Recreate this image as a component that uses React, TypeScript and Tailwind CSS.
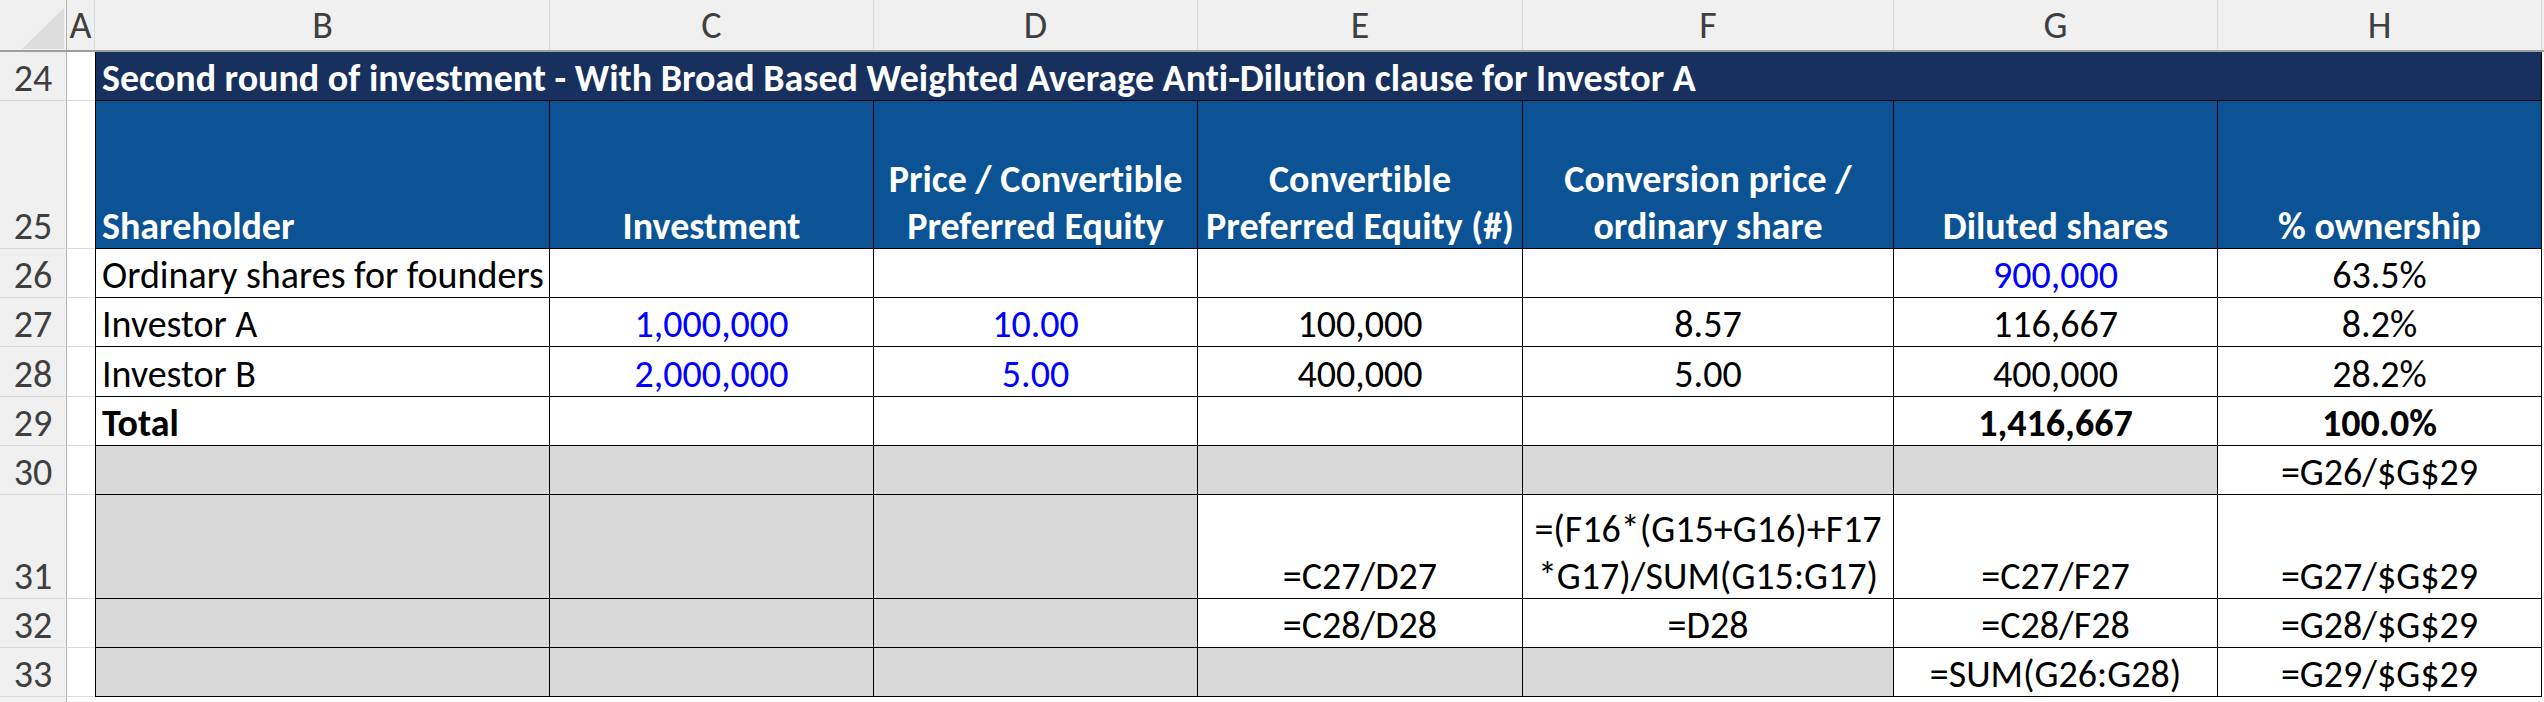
import React from "react"

type Cell = {
  text?: string
  lines?: string[]
  gray?: boolean
  blue?: boolean
  bold?: boolean
  left?: boolean
}

// column widths for B..H, in px (B also carries the table's left border)
const widths = ["w-[455px]", "w-[324px]", "w-[324px]", "w-[325px]", "w-[371px]", "w-[324px]", "w-[324px]"]
const letters = ["B", "C", "D", "E", "F", "G", "H"]

const headers: string[][] = [
  ["Shareholder"],
  ["Investment"],
  ["Price / Convertible", "Preferred Equity"],
  ["Convertible", "Preferred Equity (#)"],
  ["Conversion price /", "ordinary share"],
  ["Diluted shares"],
  ["% ownership"],
]

const rows: { num: number; h: string; cells: Cell[] }[] = [
  {
    num: 26,
    h: "h-[49px]",
    cells: [
      { text: "Ordinary shares for founders", left: true },
      {},
      {},
      {},
      {},
      { text: "900,000", blue: true },
      { text: "63.5%" },
    ],
  },
  {
    num: 27,
    h: "h-[49px]",
    cells: [
      { text: "Investor A", left: true },
      { text: "1,000,000", blue: true },
      { text: "10.00", blue: true },
      { text: "100,000" },
      { text: "8.57" },
      { text: "116,667" },
      { text: "8.2%" },
    ],
  },
  {
    num: 28,
    h: "h-[50px]",
    cells: [
      { text: "Investor B", left: true },
      { text: "2,000,000", blue: true },
      { text: "5.00", blue: true },
      { text: "400,000" },
      { text: "5.00" },
      { text: "400,000" },
      { text: "28.2%" },
    ],
  },
  {
    num: 29,
    h: "h-[49px]",
    cells: [
      { text: "Total", left: true, bold: true },
      {},
      {},
      {},
      {},
      { text: "1,416,667", bold: true },
      { text: "100.0%", bold: true },
    ],
  },
  {
    num: 30,
    h: "h-[49px]",
    cells: [
      { gray: true },
      { gray: true },
      { gray: true },
      { gray: true },
      { gray: true },
      { gray: true },
      { text: "=G26/$G$29" },
    ],
  },
  {
    num: 31,
    h: "h-[104px]",
    cells: [
      { gray: true },
      { gray: true },
      { gray: true },
      { text: "=C27/D27" },
      { lines: ["=(F16*(G15+G16)+F17", "*G17)/SUM(G15:G17)"] },
      { text: "=C27/F27" },
      { text: "=G27/$G$29" },
    ],
  },
  {
    num: 32,
    h: "h-[49px]",
    cells: [
      { gray: true },
      { gray: true },
      { gray: true },
      { text: "=C28/D28" },
      { text: "=D28" },
      { text: "=C28/F28" },
      { text: "=G28/$G$29" },
    ],
  },
  {
    num: 33,
    h: "h-[49px]",
    cells: [
      { gray: true },
      { gray: true },
      { gray: true },
      { gray: true },
      { gray: true },
      { text: "=SUM(G26:G28)" },
      { text: "=G29/$G$29" },
    ],
  },
]

function RowNum({ n, h }: { n?: number; h: string }) {
  return (
    <div className={`${h} w-[67px] shrink-0 flex items-end justify-center bg-[#f0f0f0] border-r border-r-[#b5b5b5] border-b border-b-[#dadada] text-[#3f3f3f] text-[38px] leading-[44px]`}>
      {n}
    </div>
  )
}

function ColA({ h }: { h: string }) {
  return <div className={`${h} w-[28px] shrink-0 bg-white border-b border-b-[#dadada]`}></div>
}

function DataCell({ cell, i }: { cell: Cell; i: number }) {
  const bg = cell.gray ? "bg-[#d9d9d9]" : "bg-white"
  const color = cell.blue ? "text-[#0000ff]" : "text-black"
  const weight = cell.bold ? "font-bold" : "font-normal"
  const align = cell.left ? "justify-start pl-[6px]" : "justify-center"
  return (
    <div
      className={`${widths[i]} shrink-0 h-full flex flex-col items-stretch justify-end border-r border-b border-black ${i === 0 ? "border-l" : ""} ${bg}`}
    >
      {(cell.lines ?? (cell.text ? [cell.text] : [])).map((t, k) => (
        <div key={k} className={`flex ${align} ${color} ${weight} text-[38px] leading-[50px] last:leading-[44px] whitespace-nowrap`}>
          {t}
        </div>
      ))}
    </div>
  )
}

export default function App() {
  return (
    <div className="w-[2544px] h-[702px] overflow-hidden bg-white [font-family:Carlito,Calibri,Lato,sans-serif] [font-variant-ligatures:none]">
      {/* column letters */}
      <div className="flex h-[52px] bg-[#f0f0f0] border-b-2 border-b-[#9e9e9e]">
        <div className="w-[67px] shrink-0 border-r border-r-[#b5b5b5] relative">
          <svg className="absolute left-[22px] top-[8px]" width="42" height="41" viewBox="0 0 42 41">
            <polygon points="42,0 42,41 0,41" fill="#dcdcdc" />
          </svg>
        </div>
        <div className="w-[28px] shrink-0 flex items-center justify-center border-r border-r-[#dadada] text-[#3f3f3f] text-[38px]">A</div>
        {letters.map((l, i) => (
          <div
            key={l}
            className={`${widths[i]} shrink-0 flex items-center justify-center border-r border-r-[#dadada] text-[#3f3f3f] text-[38px] ${i === 0 ? "border-l border-l-[#f0f0f0]" : ""}`}
          >
            {l}
          </div>
        ))}
        <div className="flex-1"></div>
      </div>

      {/* row 24: title */}
      <div className="flex h-[49px]">
        <RowNum n={24} h="h-[49px]" />
        <ColA h="h-[49px]" />
        <div className="w-[2447px] shrink-0 flex items-end pl-[6px] bg-[#17305e] border-x border-b border-black text-white font-bold text-[38px] leading-[44px] whitespace-nowrap">
          Second round of investment - With Broad Based Weighted Average Anti-Dilution clause for Investor A
        </div>
      </div>

      {/* row 25: column headings */}
      <div className="flex h-[148px]">
        <RowNum n={25} h="h-[148px]" />
        <ColA h="h-[148px]" />
        {headers.map((lines, i) => (
          <div
            key={i}
            className={`${widths[i]} shrink-0 flex flex-col justify-end bg-[#0b5394] border-r border-b border-black ${i === 0 ? "border-l" : ""}`}
          >
            {lines.map((t, k) => (
              <div
                key={k}
                className={`flex ${i === 0 ? "justify-start pl-[6px]" : "justify-center"} text-white font-bold text-[38px] leading-[49px] last:leading-[44px] whitespace-nowrap`}
              >
                {t}
              </div>
            ))}
          </div>
        ))}
      </div>

      {rows.map((r) => (
        <div key={r.num} className={`flex ${r.h}`}>
          <RowNum n={r.num} h={r.h} />
          <ColA h={r.h} />
          {r.cells.map((c, i) => (
            <DataCell key={i} cell={c} i={i} />
          ))}
        </div>
      ))}

      <div className="flex h-[5px]">
        <div className="w-[67px] shrink-0 bg-[#f0f0f0] border-r border-r-[#b5b5b5]"></div>
      </div>
    </div>
  )
}
